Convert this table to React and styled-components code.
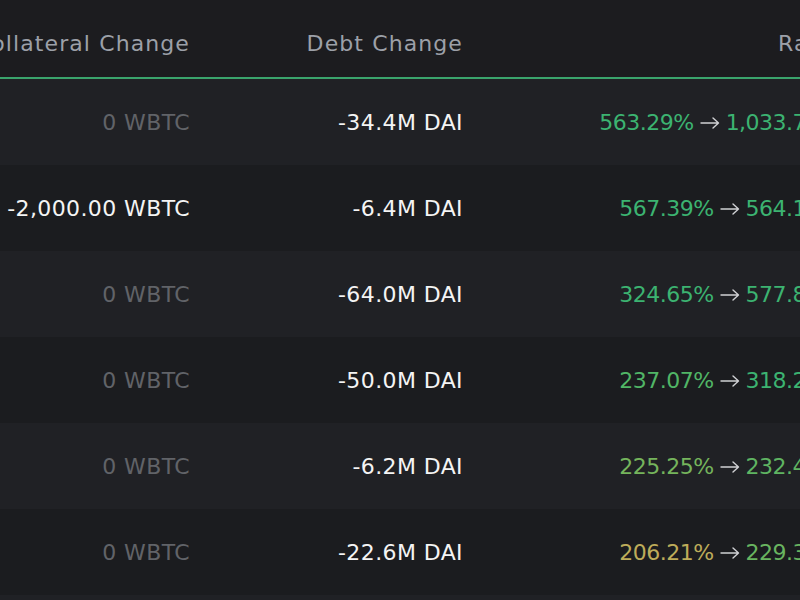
import React from 'react';
import styled, { createGlobalStyle } from 'styled-components';

const GlobalStyle = createGlobalStyle`
  html, body {
    margin: 0;
    padding: 0;
    background: #1c1d20;
    overflow: hidden;
  }
  body {
    font-family: "DejaVu Sans", "Liberation Sans", sans-serif;
  }
`;

const Table = styled.div`
  width: 840px;
  display: grid;
  grid-template-columns: 190px 273px 377px;
`;

const HeadCell = styled.div`
  height: 79px;
  padding-top: 10px;
  box-sizing: border-box;
  display: flex;
  align-items: center;
  justify-content: flex-end;
  white-space: nowrap;
  background: #1c1c1f;
  border-bottom: 2px solid #3aa46c;
  color: #9ca0a8;
  font-size: 22px;
  letter-spacing: 1.1px;
`;

const Cell = styled.div`
  height: 86px;
  display: flex;
  align-items: center;
  justify-content: flex-end;
  white-space: nowrap;
  background: ${(p) => (p.$odd ? '#202125' : '#1b1c1f')};
  color: ${(p) => (p.$muted ? '#616368' : '#f4f4f4')};
  font-size: 22px;
  letter-spacing: 0.4px;
`;

const Ratio = styled.span`
  color: ${(p) => p.$color};
  letter-spacing: -0.5px;
`;

const Arrow = styled.svg`
  width: 20px;
  height: 12px;
  margin: 2px 6px 0;
  flex: none;
`;

const stops = [
  [200, [214, 170, 90]],
  [225, [118, 180, 92]],
  [240, [72, 181, 105]],
  [260, [60, 179, 113]],
];

const ratioColor = (v) => {
  if (v <= stops[0][0]) return `rgb(${stops[0][1].join(',')})`;
  for (let i = 1; i < stops.length; i++) {
    const [x1, c1] = stops[i];
    const [x0, c0] = stops[i - 1];
    if (v <= x1) {
      const t = (v - x0) / (x1 - x0);
      const c = c0.map((a, k) => Math.round(a + (c1[k] - a) * t));
      return `rgb(${c.join(',')})`;
    }
  }
  return `rgb(${stops[stops.length - 1][1].join(',')})`;
};

const fmt = (v) =>
  v.toLocaleString('en-US', { minimumFractionDigits: 2, maximumFractionDigits: 2 }) + '%';

const rows = [
  { coll: 0, debt: '-34.4M DAI', from: 563.29, to: 1033.78 },
  { coll: -2000, debt: '-6.4M DAI', from: 567.39, to: 564.16 },
  { coll: 0, debt: '-64.0M DAI', from: 324.65, to: 577.84 },
  { coll: 0, debt: '-50.0M DAI', from: 237.07, to: 318.25 },
  { coll: 0, debt: '-6.2M DAI', from: 225.25, to: 232.47 },
  { coll: 0, debt: '-22.6M DAI', from: 206.21, to: 229.35 },
  { coll: 0, debt: '-12.0M DAI', from: 241.53, to: 268.12 },
];

const collText = (c) =>
  c === 0
    ? '0 WBTC'
    : c.toLocaleString('en-US', { minimumFractionDigits: 2, maximumFractionDigits: 2 }) + ' WBTC';

const ArrowIcon = () => (
  <Arrow viewBox="0 0 20 12" fill="none" stroke="#d0d1d4" strokeWidth="1.4" strokeLinecap="round" strokeLinejoin="round">
    <path d="M1 6h17.5M13 1l5.5 5-5.5 5" />
  </Arrow>
);

const App = () => (
  <>
    <GlobalStyle />
    <Table>
      <HeadCell>Collateral Change</HeadCell>
      <HeadCell>Debt Change</HeadCell>
      <HeadCell>Ratio</HeadCell>
      {rows.map((r, i) => {
        const odd = i % 2 === 0;
        return (
          <React.Fragment key={i}>
            <Cell $odd={odd} $muted={r.coll === 0}>{collText(r.coll)}</Cell>
            <Cell $odd={odd}>{r.debt}</Cell>
            <Cell $odd={odd}>
              <Ratio $color={ratioColor(r.from)}>{fmt(r.from)}</Ratio>
              <ArrowIcon />
              <Ratio $color={ratioColor(r.to)}>{fmt(r.to)}</Ratio>
            </Cell>
          </React.Fragment>
        );
      })}
    </Table>
  </>
);

export default App;
